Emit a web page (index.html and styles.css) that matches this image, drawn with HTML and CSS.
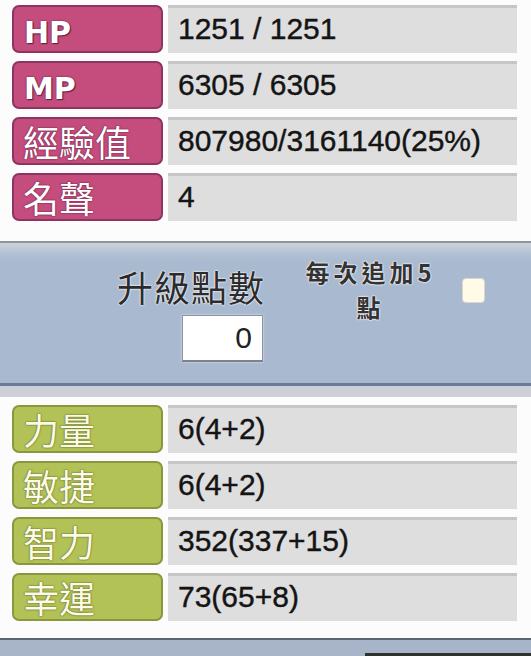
FILE: index.html
```html
<!DOCTYPE html>
<html>
<head>
<meta charset="utf-8">
<link rel="stylesheet" href="styles.css">
</head>
<body>
<div class="stats stats-top">
  <div class="row"><div class="lbl pink en">HP</div><div class="val">1251 / 1251</div></div>
  <div class="row"><div class="lbl pink en">MP</div><div class="val">6305 / 6305</div></div>
  <div class="row"><div class="lbl pink zh">經驗值</div><div class="val">807980/3161140(25%)</div></div>
  <div class="row"><div class="lbl pink zh">名聲</div><div class="val">4</div></div>
</div>
<div class="points">
  <div class="pts-main">
    <div class="pts-title">升級點數</div>
    <div class="pts-input">0</div>
  </div>
  <div class="pts-note"><div class="note-line">每次追加5</div><div class="note-line">點</div></div>
  <div class="pts-check"></div>
</div>
<div class="divider"></div>
<div class="stats stats-bottom">
  <div class="row"><div class="lbl green zh">力量</div><div class="val">6(4+2)</div></div>
  <div class="row"><div class="lbl green zh">敏捷</div><div class="val">6(4+2)</div></div>
  <div class="row"><div class="lbl green zh">智力</div><div class="val">352(337+15)</div></div>
  <div class="row"><div class="lbl green zh">幸運</div><div class="val">73(65+8)</div></div>
</div>
<div class="footer"><div class="footer-btn"></div></div>
</body>
</html>
```
FILE: styles.css
```css
html, body {
  margin: 0;
  padding: 0;
  background: #fcfcfc;
  width: 531px;
  height: 656px;
  overflow: hidden;
  font-family: "Liberation Sans", "Noto Sans CJK TC", sans-serif;
}
.stats {
  display: flex;
  flex-direction: column;
  gap: 8px;
  padding-left: 12px;
  width: 505px;
}
.stats-top { padding-top: 5px; }
.stats-bottom { padding-top: 8px; }
.row {
  display: flex;
  gap: 5px;
  height: 48px;
}
.lbl {
  box-sizing: border-box;
  width: 151px;
  height: 48px;
  border-radius: 7px;
  border: 2px solid;
  display: flex;
  align-items: center;
  padding-left: 10px;
  color: #fff;
}
.pink {
  background: #c44d7d;
  border-color: #8c3560;
}
.green {
  background: #b3c257;
  border-color: #8b963f;
  color: #fbfbe6;
}
.en {
  font-family: "DejaVu Sans", sans-serif;
  font-weight: bold;
  font-size: 30px;
  padding-top: 7px;
  text-shadow: 0 0 2px #5a2040, 1px 1px 1px #5a2040;
}
.zh {
  font-family: "Noto Sans CJK TC", sans-serif;
  font-size: 36px;
  font-weight: 400;
  padding-left: 9px;
}
.pink.zh { text-shadow: 0 0 2px #6e2045, 0 0 1px #6e2045; }
.green.zh { text-shadow: 0 0 2px #5d6424, 0 0 1px #5d6424; }
.val {
  box-sizing: border-box;
  width: 349px;
  height: 48px;
  background: #dedede;
  border-top: 3px solid #c6c6c6;
  display: flex;
  align-items: center;
  padding-left: 10px;
  padding-bottom: 3px;
  font-size: 30px;
  color: #141414;
  -webkit-text-stroke: 0.4px #141414;
}
.points {
  margin-top: 20px;
  height: 126px;
  border-top: 2px solid #8e949c;
  border-bottom: 3px solid #6c7b93;
  background: linear-gradient(#cdd3dc 0px, #b0bfd2 12px, #a9b9cf 20px, #a9b9cf 100%);
  display: flex;
  align-items: flex-start;
  padding-top: 14px;
  padding-left: 100px;
}
.pts-main {
  width: 163px;
  margin-top: 9px;
  display: flex;
  flex-direction: column;
  align-items: flex-end;
}
.pts-title {
  font-family: "Noto Sans CJK TC", sans-serif;
  font-size: 36px;
  line-height: 40px;
  color: #2b2b2b;
  letter-spacing: 1px;
  margin-right: -2px;
  text-shadow: 0 0 2px #fff, 0 0 2px #fff;
}
.pts-input {
  box-sizing: border-box;
  width: 81px;
  height: 47px;
  margin-top: 9px;
  background: #fff;
  border: 1px solid #8a93a0;
  border-bottom: 2px solid #7a8290;
  box-shadow: 0 0 2px #e8ecf2;
  text-align: right;
  padding-right: 10px;
  font-size: 30px;
  line-height: 44px;
  color: #222;
}
.pts-note {
  width: 133px;
  margin-left: 39px;
  margin-top: -3px;
  display: flex;
  flex-direction: column;
  align-items: center;
  font-family: "Noto Sans CJK TC", sans-serif;
  font-weight: bold;
  font-size: 24px;
  line-height: 35px;
  letter-spacing: 4px;
  color: #333;
  text-shadow: 0 0 2px #fff, 0 0 2px #fff, 0 0 1px #fff;
}
.note-line {
  margin-right: -4px;
}
.pts-check {
  box-sizing: border-box;
  width: 23px;
  height: 25px;
  margin-left: 27px;
  margin-top: 21px;
  background: #fffbe6;
  border: 1px solid #d8d8d0;
  border-radius: 4px;
}
.divider {
  height: 11px;
  background: #cdd0d6;
}
.footer {
  box-sizing: border-box;
  margin-top: 17px;
  height: 18px;
  border-top: 2px solid #5d6474;
  background: #a8b5c9;
  display: flex;
  padding-left: 365px;
  padding-top: 13px;
  overflow: hidden;
}
.footer-btn {
  flex: 1;
  height: 10px;
  background: #303030;
}
```
